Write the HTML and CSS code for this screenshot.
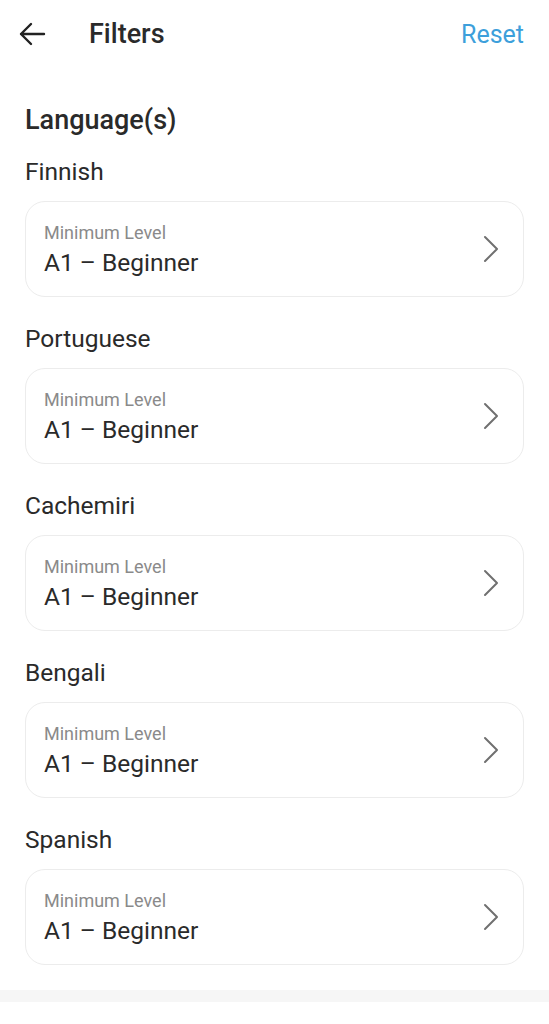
FILE: index.html
```html
<!DOCTYPE html>
<html lang="en">
<head>
    <meta charset="UTF-8">
    <meta name="viewport" content="width=device-width, initial-scale=1.0">
    <title>Filters</title>
    <link rel="stylesheet" href="styles.css">
</head>
<body>
    <div class="header">
        <div class="header-left">
            <svg class="back" width="28" height="28" viewBox="0 0 28 28">
                <path d="M26 14H3M13 4L3 14l10 10" fill="none" stroke="#222" stroke-width="2.4" stroke-linecap="round" stroke-linejoin="round"/>
            </svg>
            <h1>Filters</h1>
        </div>
        <a class="reset" href="#">Reset</a>
    </div>

    <div class="content">
        <h2>Language(s)</h2>

        <div class="group">
            <div class="lang">Finnish</div>
            <div class="card">
                <div class="card-text">
                    <div class="card-label">Minimum Level</div>
                    <div class="card-value">A1 – Beginner</div>
                </div>
                <svg class="chevron" width="16" height="28" viewBox="0 0 16 28"><path d="M2 2l12 12L2 26" fill="none" stroke="#707070" stroke-width="2" stroke-linecap="round" stroke-linejoin="round"/></svg>
            </div>
        </div>

        <div class="group">
            <div class="lang">Portuguese</div>
            <div class="card">
                <div class="card-text">
                    <div class="card-label">Minimum Level</div>
                    <div class="card-value">A1 – Beginner</div>
                </div>
                <svg class="chevron" width="16" height="28" viewBox="0 0 16 28"><path d="M2 2l12 12L2 26" fill="none" stroke="#707070" stroke-width="2" stroke-linecap="round" stroke-linejoin="round"/></svg>
            </div>
        </div>

        <div class="group">
            <div class="lang">Cachemiri</div>
            <div class="card">
                <div class="card-text">
                    <div class="card-label">Minimum Level</div>
                    <div class="card-value">A1 – Beginner</div>
                </div>
                <svg class="chevron" width="16" height="28" viewBox="0 0 16 28"><path d="M2 2l12 12L2 26" fill="none" stroke="#707070" stroke-width="2" stroke-linecap="round" stroke-linejoin="round"/></svg>
            </div>
        </div>

        <div class="group">
            <div class="lang">Bengali</div>
            <div class="card">
                <div class="card-text">
                    <div class="card-label">Minimum Level</div>
                    <div class="card-value">A1 – Beginner</div>
                </div>
                <svg class="chevron" width="16" height="28" viewBox="0 0 16 28"><path d="M2 2l12 12L2 26" fill="none" stroke="#707070" stroke-width="2" stroke-linecap="round" stroke-linejoin="round"/></svg>
            </div>
        </div>

        <div class="group">
            <div class="lang">Spanish</div>
            <div class="card">
                <div class="card-text">
                    <div class="card-label">Minimum Level</div>
                    <div class="card-value">A1 – Beginner</div>
                </div>
                <svg class="chevron" width="16" height="28" viewBox="0 0 16 28"><path d="M2 2l12 12L2 26" fill="none" stroke="#707070" stroke-width="2" stroke-linecap="round" stroke-linejoin="round"/></svg>
            </div>
        </div>
    </div>

    <div class="divider"></div>
</body>
</html>
```

FILE: styles.css
```css
body {
    font-family: Roboto, "Noto Sans", sans-serif;
    margin: 0;
    background: #fff;
    color: #2a2a2a;
    width: 549px;
}
.header {
    height: 68px;
    display: flex;
    align-items: center;
    justify-content: space-between;
    padding: 0 25px 0 18px;
}
.header-left {
    display: flex;
    align-items: center;
}
.back {
    display: block;
}
.header h1 {
    margin: 0 0 0 43px;
    font-size: 27px;
    font-weight: 500;
    color: #2a2a2a;
}
.reset {
    color: #3d9fdb;
    font-size: 25px;
    text-decoration: none;
}
.content {
    padding: 35px 25px 0 25px;
}
.content h2 {
    margin: 0 0 20px 0;
    font-size: 27px;
    line-height: 34px;
    font-weight: 500;
    color: #2a2a2a;
}
.group {
    margin-bottom: 27px;
}
.group:last-child {
    margin-bottom: 25px;
}
.lang {
    font-size: 24.5px;
    line-height: 30px;
    margin-bottom: 14px;
    color: #2a2a2a;
}
.card {
    height: 96px;
    box-sizing: border-box;
    border: 1px solid #ececec;
    border-radius: 20px;
    display: flex;
    align-items: center;
    justify-content: space-between;
    padding: 0 24px 0 18px;
}
.card-label {
    font-size: 18px;
    line-height: 22px;
    color: #8a8a8a;
    margin-bottom: 5px;
}
.card-value {
    font-size: 24.5px;
    line-height: 28px;
    color: #2a2a2a;
}
.chevron {
    display: block;
}
.divider {
    height: 12px;
    background: #f6f6f6;
}
```
